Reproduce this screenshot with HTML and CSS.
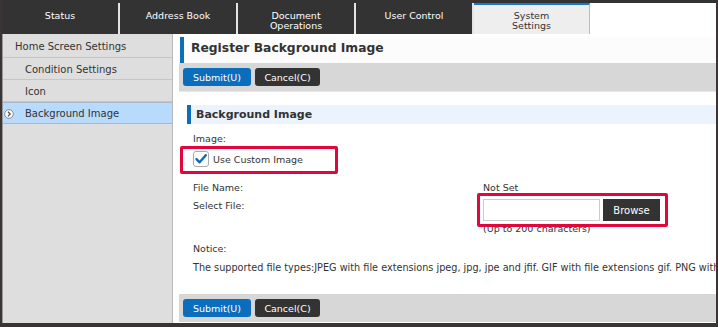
FILE: index.html
```html
<!DOCTYPE html>
<html lang="en">
<head>
    <meta charset="UTF-8">
    <title>Register Background Image</title>
    <link rel="stylesheet" href="styles.css">
</head>
<body>
    <div class="page">
        <!-- Onglets principaux -->
        <div class="tabs">
            <div class="tab">Status</div>
            <div class="tab">Address Book</div>
            <div class="tab">Document<br>Operations</div>
            <div class="tab">User Control</div>
            <div class="tab active">System<br>Settings</div>
            <div class="tab-filler"></div>
        </div>

        <div class="main">
            <!-- Menu de gauche -->
            <div class="sidebar">
                <div class="menu-item first">Home Screen Settings</div>
                <div class="menu-item sub">Condition Settings</div>
                <div class="menu-item sub">Icon</div>
                <div class="menu-item sub selected">
                    <svg class="menu-icon" width="10" height="10" viewBox="0 0 10 10">
                        <circle cx="5" cy="5" r="4.3" fill="#fff" stroke="#888" stroke-width="1"/>
                        <path d="M4 2.8 L6.2 5 L4 7.2" fill="none" stroke="#555" stroke-width="1.3"/>
                    </svg>
                    Background Image
                </div>
            </div>

            <!-- Contenu -->
            <div class="content">
                <div class="page-title">Register Background Image</div>
                <div class="toolbar">
                    <button class="btn btn-submit">Submit(U)</button>
                    <button class="btn btn-cancel">Cancel(C)</button>
                </div>

                <div class="section-title">Background Image</div>

                <div class="form">
                    <div class="line label-image">Image:</div>
                    <div class="check-row">
                        <span class="checkbox">
                            <svg width="14" height="14" viewBox="0 0 14 14">
                                <path d="M2.5 7.2 L5.6 10.3 L11.8 3.2" fill="none" stroke="#1468b8" stroke-width="2.4" stroke-linecap="round" stroke-linejoin="round"/>
                            </svg>
                        </span>
                        <span>Use Custom Image</span>
                    </div>

                    <div class="field-grid">
                        <div class="line">File Name:</div>
                        <div class="line">Not Set</div>
                        <div class="line">Select File:</div>
                        <div class="file-col">
                            <div class="file-row">
                                <span class="file-input"></span>
                                <button class="btn-browse">Browse</button>
                            </div>
                            <div class="line">(Up to 200 characters)</div>
                        </div>
                    </div>

                    <div class="line notice-label">Notice:</div>
                    <div class="line notice-text">The supported file types:JPEG with file extensions jpeg, jpg, jpe and jfif. GIF with file extensions gif. PNG with file extensions png.</div>

                    <!-- Cadres rouges d'annotation -->
                    <div class="mark mark-check"></div>
                    <div class="mark mark-file"></div>
                </div>

                <div class="toolbar toolbar-bottom">
                    <button class="btn btn-submit">Submit(U)</button>
                    <button class="btn btn-cancel">Cancel(C)</button>
                </div>
            </div>
        </div>
    </div>
</body>
</html>
```

FILE: styles.css
```css
body {
    margin: 0;
    padding: 0;
    background-color: #fff;
    font-family: "DejaVu Sans", Verdana, sans-serif;
    font-size: 9.5px;
    color: #333;
}
.page {
    width: 718px;
    height: 327px;
    box-sizing: border-box;
    border-left: 2px solid #3a3434;
    border-right: 2px solid #3a3434;
    border-bottom: 4px solid #3a3434;
    display: flex;
    flex-direction: column;
    overflow: hidden;
}
.tabs {
    display: flex;
    height: 34px;
    box-sizing: border-box;
    border-top: 3px solid #333;
    flex-shrink: 0;
}
.tab {
    width: 118px;
    box-sizing: border-box;
    padding-top: 8px;
    line-height: 10px;
    text-align: center;
    color: #fff;
    background-color: #333;
    border-right: 2px solid #e4e4e4;
    flex-shrink: 0;
}
.tab.active {
    width: 116px;
    background-color: #eee;
    color: #333;
    border-top: 2px solid #1a78c8;
    border-right: 1px solid #bbb;
    padding-top: 6px;
}
.tab-filler {
    flex: 1;
    background-color: #fff;
}
.main {
    flex: 1;
    display: flex;
    min-height: 0;
}
.sidebar {
    width: 171px;
    box-sizing: border-box;
    background-color: #dedede;
    border-left: 1px solid #999;
    border-right: 1px solid #b8b8b8;
    padding-top: 1px;
    font-size: 10px;
    flex-shrink: 0;
}
.menu-item {
    height: 22px;
    box-sizing: border-box;
    padding-top: 2px;
    line-height: 19px;
    padding-left: 12px;
    border-bottom: 1px solid #c6c6c6;
    white-space: nowrap;
    position: relative;
}
.menu-item.first {
    height: 23px;
}
.menu-item.sub {
    padding-left: 22px;
}
.menu-item.selected {
    background-color: #b8dafc;
    border-top: 1px solid #a9b8c8;
    border-bottom: 1px solid #a9b8c8;
    padding-top: 1px;
}
.menu-icon {
    position: absolute;
    left: 1px;
    top: 6px;
}
.content {
    flex: 1;
    margin-left: 6px;
    padding-top: 3px;
    display: flex;
    flex-direction: column;
    min-width: 0;
    overflow: hidden;
}
.page-title {
    height: 26px;
    box-sizing: border-box;
    line-height: 22px;
    margin-left: 1px;
    padding-left: 7px;
    border-left: 4px solid #0b6fbb;
    background-color: #fcfcfc;
    font-size: 12.3px;
    font-weight: bold;
    white-space: nowrap;
}
.toolbar {
    height: 29px;
    box-sizing: border-box;
    background-color: #d7d7d7;
    border-bottom: 1px solid #e8e8e8;
    padding: 5px 4px 0;
    display: flex;
    gap: 4px;
    flex-shrink: 0;
}
.btn {
    height: 18px;
    border: none;
    border-radius: 3px;
    color: #fff;
    font-family: "DejaVu Sans", Verdana, sans-serif;
    font-size: 9.5px;
    padding: 0;
    cursor: pointer;
}
.btn-submit {
    width: 68px;
    background-color: #0a6ebd;
}
.btn-cancel {
    width: 65px;
    background-color: #333;
}
.section-title {
    margin-top: 13px;
    margin-left: 8px;
    height: 19px;
    line-height: 19px;
    padding-left: 5px;
    border-left: 4px solid #0b6fbb;
    background-color: #ebf3ff;
    font-size: 11px;
    font-weight: bold;
}
.form {
    position: relative;
    padding-left: 14px;
    flex: 1;
}
.line {
    height: 16px;
    line-height: 16px;
    white-space: nowrap;
}
.label-image {
    margin-top: 7px;
}
.check-row {
    margin-top: 3px;
    height: 18px;
    display: flex;
    align-items: center;
    gap: 4px;
}
.checkbox {
    width: 16px;
    height: 16px;
    box-sizing: border-box;
    border: 1px solid #aaa;
    border-radius: 3px;
    background-color: #fff;
    display: flex;
    align-items: center;
    justify-content: center;
}
.field-grid {
    margin-top: 12px;
    display: grid;
    grid-template-columns: 290px 1fr;
    row-gap: 2px;
}
.file-row {
    display: flex;
    gap: 3px;
    margin-top: 1px;
}
.file-input {
    width: 117px;
    height: 22px;
    box-sizing: border-box;
    border: 1px solid #ccc;
    background-color: #fff;
}
.btn-browse {
    width: 57px;
    height: 22px;
    border: none;
    background-color: #333;
    color: #fff;
    font-family: "DejaVu Sans", Verdana, sans-serif;
    font-size: 10px;
    padding: 0;
}
.notice-label {
    margin-top: 4px;
}
.notice-text {
    margin-top: 3px;
    font-size: 9.7px;
}
.mark {
    position: absolute;
    border: 3px solid #e3063c;
    border-radius: 2px;
}
.mark-check {
    left: 1px;
    top: 22px;
    width: 152px;
    height: 22px;
}
.mark-file {
    left: 298px;
    top: 69px;
    width: 185px;
    height: 28px;
}
.toolbar-bottom {
    border-bottom: none;
    height: 28px;
    margin-bottom: 1px;
}
```
